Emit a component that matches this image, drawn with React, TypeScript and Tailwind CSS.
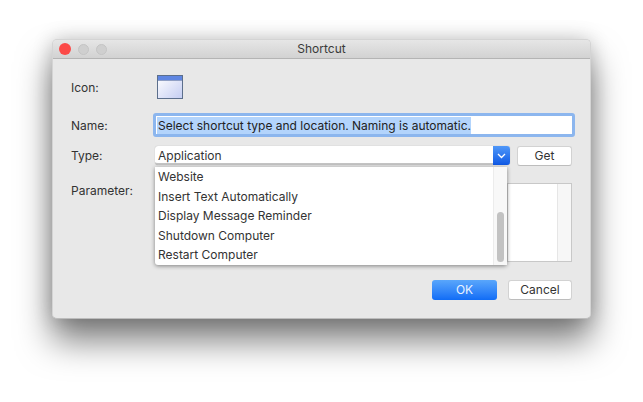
export default function App() {
  const items = ["Website", "Insert Text Automatically", "Display Message Reminder", "Shutdown Computer", "Restart Computer"];
  return (
    <div className="w-[643px] h-[402px] bg-white overflow-hidden pt-[39px] pl-[52px] font-['Inter',sans-serif] text-[12px] text-[#333]">
      <div className="w-[539px] h-[280px] rounded-[5px] bg-[#e8e8e8] shadow-[0_22px_34px_rgba(0,0,0,0.5),0_0_20px_rgba(0,0,0,0.2)] flex flex-col overflow-hidden border border-[#d4d4d4] border-b-[#bcbcbc]">
        <div className="relative h-[19px] shrink-0 bg-gradient-to-b from-[#e6e6e6] to-[#d2d2d2] border-b border-[#b4b4b4] flex items-center justify-center text-[#3a3a3a]">
          <div className="absolute left-[6px] top-[3px] flex gap-[7px]">
            <span className="w-[12px] h-[12px] rounded-full bg-[#fc4a48]" />
            <span className="w-[11px] h-[11px] mt-px rounded-full bg-[#cfcfcf] border border-[#c4c4c4]" />
            <span className="w-[11px] h-[11px] mt-px rounded-full bg-[#cfcfcf] border border-[#c4c4c4]" />
          </div>
          Shortcut
        </div>
        <div className="relative flex-1 pl-[18px] pr-[18px]">
          <div className="flex items-center h-[30px] mt-[14px]">
            <span className="w-[86px]">Icon:</span>
            <svg width="26" height="24" viewBox="0 0 26 24" className="-mt-[2px]">
              <defs>
                <linearGradient id="g" x1="0" y1="0" x2="1" y2="1">
                  <stop offset="0" stopColor="#ffffff" />
                  <stop offset="1" stopColor="#c4cdf2" />
                </linearGradient>
              </defs>
              <rect x="0.5" y="0.5" width="25" height="23" fill="url(#g)" stroke="#5c6f8c" />
              <rect x="1" y="1" width="24" height="4" fill="#5f86e2" />
              <rect x="1" y="5" width="24" height="1" fill="#8f9fc4" />
            </svg>
          </div>
          <div className="flex items-center h-[24px] mt-[10px]">
            <span className="w-[82px] shrink-0 pt-[2px]">Name:</span>
            <div className="w-[422px] shrink-0 h-[24px] rounded-[3px] border-[3px] border-[#8cb6ee] bg-white flex items-center pl-[1px]">
              <span className="bg-[#b3d4fc] text-[#222] leading-[16px] pl-[1px] pt-px">Select shortcut type and location. Naming is automatic.</span>
            </div>
          </div>
          <div className="flex items-center h-[19px] mt-[9px]">
            <span className="w-[84px] shrink-0 pt-px">Type:</span>
            <div className="w-[355px] h-[19px] rounded-[3px] bg-white border-b-2 border-[#c4c4c4] flex shadow-[0_0_1px_rgba(0,0,0,0.3)]">
              <span className="flex-1 pl-[3px] leading-[20px]">Application</span>
              <span className="w-[17px] h-[19px] rounded-r-[3px] bg-gradient-to-b from-[#4f97f8] to-[#0f58e4] flex items-center justify-center">
                <svg width="9" height="6" viewBox="0 0 9 6"><path d="M1 1l3.5 3.5L8 1" fill="none" stroke="#fff" strokeWidth="1.3" /></svg>
              </span>
            </div>
            <div className="ml-[7px] w-[55px] h-[20px] rounded-[3px] bg-white border border-[#d2d2d2] border-b-[#bdbdbd] flex items-center justify-center">Get</div>
          </div>
          <div className="flex items-start mt-[18px] h-[79px]">
            <span className="w-[436px] shrink-0 -mt-[1px]">Parameter:</span>
            <div className="w-[65px] h-[79px] bg-white border border-[#c8c8c8] flex justify-end">
              <div className="w-[14px] bg-[#f7f7f7] border-l border-[#e6e6e6]" />
            </div>
          </div>
          <div className="flex justify-end gap-[11px] mt-[18px]">
            <div className="w-[65px] h-[20px] rounded-[3px] bg-gradient-to-b from-[#59a6fb] to-[#0f6cf6] text-[#e8f2ff] flex items-center justify-center">OK</div>
            <div className="w-[64px] h-[20px] rounded-[3px] bg-white border border-[#d2d2d2] border-b-[#bdbdbd] flex items-center justify-center">Cancel</div>
          </div>
          <div className="absolute left-[102px] top-[108px] w-[352px] h-[98px] bg-white rounded-b-[3px] shadow-[0_1px_4px_rgba(0,0,0,0.45)] flex">
            <div className="flex-1 pl-[3px] text-[#333]">
              {items.map((t) => (
                <div key={t} className="h-[19.6px] leading-[19px]">{t}</div>
              ))}
            </div>
            <div className="w-[14px] bg-[#f8f8f8] border-l border-[#ececec] relative">
              <div className="absolute left-[3px] top-[45px] w-[7px] h-[50px] rounded-full bg-[#c2c2c2]" />
            </div>
          </div>
        </div>
      </div>
    </div>
  );
}
